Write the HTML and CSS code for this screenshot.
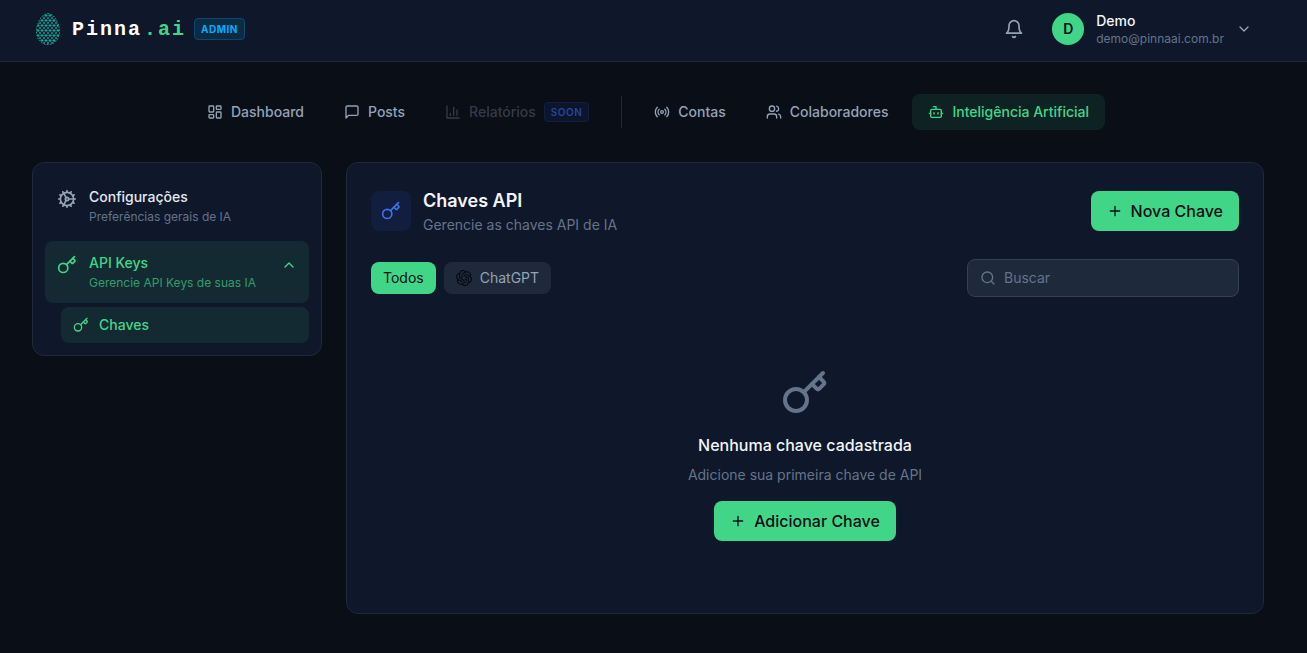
FILE: index.html
```html
<!DOCTYPE html>
<html lang="pt-BR">

<head>
    <meta charset="UTF-8">
    <meta name="viewport" content="width=device-width, initial-scale=1.0">
    <title>Pinna.ai - Chaves API</title>
    <link rel="stylesheet" href="styles.css">
</head>

<body>
    <!-- shared icons -->
    <svg class="sprite" aria-hidden="true">
        <symbol id="key" viewBox="0 0 24 24">
            <path d="m15.5 7.5 2.3 2.3a1 1 0 0 0 1.4 0l2.1-2.1a1 1 0 0 0 0-1.4L19 4" />
            <path d="m21 2-9.6 9.6" />
            <circle cx="7.5" cy="15.5" r="5.5" />
        </symbol>
        <symbol id="plus" viewBox="0 0 24 24">
            <path d="M5 12h14M12 5v14" />
        </symbol>
    </svg>

    <header class="header">
        <a class="brand" href="#">
            <svg class="brand-logo" viewBox="0 0 32 32" aria-hidden="true">
                <defs>
                    <pattern id="mesh" width="4" height="5" patternUnits="userSpaceOnUse">
                        <path d="M0 0l4 5M4 0L0 5M0 2.5h4" stroke="#0d8f83" stroke-width=".6" />
                        <circle cx="2" cy="2.5" r=".9" fill="#12b59d" />
                        <circle cx="0" cy="0" r=".8" fill="#12a894" />
                        <circle cx="4" cy="0" r=".8" fill="#12a894" />
                        <circle cx="0" cy="5" r=".8" fill="#12a894" />
                        <circle cx="4" cy="5" r=".8" fill="#12a894" />
                    </pattern>
                </defs>
                <path d="M16 .5C21.500 .5 27.500 9 27.500 18.500C27.500 26 23 31.500 16 31.500S4.500 26 4.500 18.500C4.500 9 10.500 .5 16 .5z" fill="url(#mesh)" stroke="#0fa08e" stroke-width="1" stroke-dasharray="1.500 1.500" />
            </svg>
            <span class="brand-name">Pinna<span class="brand-ai">.ai</span></span>
            <span class="badge-admin">ADMIN</span>
        </a>
        <div class="header-right">
            <button class="bell" type="button" aria-label="Notificações">
                <svg class="icon icon-20" viewBox="0 0 24 24">
                    <path d="M6 8a6 6 0 0 1 12 0c0 7 3 9 3 9H3s3-2 3-9" />
                    <path d="M10.3 21a1.94 1.94 0 0 0 3.4 0" />
                </svg>
            </button>
            <button class="user" type="button">
                <span class="avatar">D</span>
                <span class="user-info">
                    <span class="user-name">Demo</span>
                    <span class="user-email">demo@pinnaai.com.br</span>
                </span>
                <svg class="icon icon-16" viewBox="0 0 24 24"><path d="m6 9 6 6 6-6" /></svg>
            </button>
        </div>
    </header>

    <div class="page">
        <nav class="nav">
            <a class="nav-item" href="#">
                <svg class="icon icon-16" viewBox="0 0 24 24">
                    <rect width="7" height="9" x="3" y="3" rx="1" />
                    <rect width="7" height="5" x="14" y="3" rx="1" />
                    <rect width="7" height="9" x="14" y="12" rx="1" />
                    <rect width="7" height="5" x="3" y="16" rx="1" />
                </svg>
                Dashboard
            </a>
            <a class="nav-item" href="#">
                <svg class="icon icon-16" viewBox="0 0 24 24">
                    <path d="M21 15a2 2 0 0 1-2 2H7l-4 4V5a2 2 0 0 1 2-2h14a2 2 0 0 1 2 2z" />
                </svg>
                Posts
            </a>
            <button class="nav-item nav-soon" type="button" disabled>
                <svg class="icon icon-16" viewBox="0 0 24 24">
                    <path d="M3 3v18h18M18 17V9M13 17V5M8 17v-3" />
                </svg>
                Relatórios
                <span class="badge-soon">SOON</span>
            </button>
            <span class="nav-divider"></span>
            <a class="nav-item" href="#">
                <svg class="icon icon-16" viewBox="0 0 24 24">
                    <path d="M4.900 19.100C1 15.200 1 8.800 4.900 4.900" />
                    <path d="M7.800 16.200c-2.300-2.300-2.300-6.100 0-8.500" />
                    <circle cx="12" cy="12" r="2" />
                    <path d="M16.200 7.800c2.300 2.300 2.300 6.100 0 8.500" />
                    <path d="M19.100 4.900C23 8.800 23 15.100 19.100 19" />
                </svg>
                Contas
            </a>
            <a class="nav-item" href="#">
                <svg class="icon icon-16" viewBox="0 0 24 24">
                    <path d="M16 21v-2a4 4 0 0 0-4-4H6a4 4 0 0 0-4 4v2" />
                    <circle cx="9" cy="7" r="4" />
                    <path d="M22 21v-2a4 4 0 0 0-3-3.870M16 3.130a4 4 0 0 1 0 7.750" />
                </svg>
                Colaboradores
            </a>
            <a class="nav-item active" href="#">
                <svg class="icon icon-16" viewBox="0 0 24 24">
                    <path d="M12 8V4H8" />
                    <rect width="16" height="12" x="4" y="8" rx="2" />
                    <path d="M2 14h2M20 14h2M15 13v2M9 13v2" />
                </svg>
                Inteligência Artificial
            </a>
        </nav>

        <div class="container">
            <aside class="card sidebar">
                <a class="side-item" href="#">
                    <svg class="icon icon-20" viewBox="0 0 24 24">
                        <circle cx="12" cy="12" r="8" />
                        <circle cx="12" cy="12" r="2" />
                        <path d="M12 2v2M12 22v-2M17 20.660l-1-1.730M11 10.270 7 3.340M20.660 17l-1.730-1M3.340 7l1.730 1M14 12h8M2 12h2M20.660 7l-1.730 1M3.340 17l1.730-1M17 3.340l-1 1.730M11 13.730l-4 6.930" />
                    </svg>
                    <span class="side-text">
                        <span class="side-title">Configurações</span>
                        <span class="side-desc">Preferências gerais de IA</span>
                    </span>
                </a>
                <button class="side-item active" type="button" aria-expanded="true">
                    <svg class="icon icon-20"><use href="#key" /></svg>
                    <span class="side-text">
                        <span class="side-title">API Keys</span>
                        <span class="side-desc">Gerencie API Keys de suas IA</span>
                    </span>
                    <svg class="icon icon-16 side-arrow" viewBox="0 0 24 24"><path d="m18 15-6-6-6 6" /></svg>
                </button>
                <a class="side-sub active" href="#">
                    <svg class="icon icon-16"><use href="#key" /></svg>
                    Chaves
                </a>
            </aside>

            <main class="card main">
                <div class="main-header">
                    <span class="main-icon"><svg class="icon icon-20"><use href="#key" /></svg></span>
                    <div>
                        <h1 class="main-title">Chaves API</h1>
                        <p class="text-muted">Gerencie as chaves API de IA</p>
                    </div>
                    <button class="btn push-right" type="button">
                        <svg class="icon icon-16"><use href="#plus" /></svg>
                        Nova Chave
                    </button>
                </div>

                <div class="toolbar">
                    <button class="chip active" type="button">Todos</button>
                    <button class="chip" type="button">
                        <svg class="openai" viewBox="0 0 24 24" aria-hidden="true">
                            <path d="M22.2819 9.8211a5.9847 5.9847 0 0 0-.5157-4.9108 6.0462 6.0462 0 0 0-6.5098-2.9A6.0651 6.0651 0 0 0 4.9807 4.1818a5.9847 5.9847 0 0 0-3.9977 2.9 6.0462 6.0462 0 0 0 .7427 7.0966 5.98 5.98 0 0 0 .511 4.9107 6.051 6.051 0 0 0 6.5146 2.9001A5.9847 5.9847 0 0 0 13.2599 24a6.0557 6.0557 0 0 0 5.7718-4.2058 5.9894 5.9894 0 0 0 3.9977-2.9001 6.0557 6.0557 0 0 0-.7475-7.073zm-9.022 12.6081a4.4755 4.4755 0 0 1-2.8764-1.0408l.1419-.0804 4.7783-2.7582a.7948.7948 0 0 0 .3927-.6813v-6.7369l2.02 1.1686a.071.071 0 0 1 .038.052v5.5826a4.504 4.504 0 0 1-4.4945 4.4944zm-9.6607-4.1254a4.4708 4.4708 0 0 1-.5346-3.0137l.142.0852 4.783 2.7582a.7712.7712 0 0 0 .7806 0l5.8428-3.3685v2.3324a.0804.0804 0 0 1-.0332.0615L9.74 19.9502a4.4992 4.4992 0 0 1-6.1408-1.6464zM2.3408 7.8956a4.485 4.485 0 0 1 2.3655-1.9728V11.6a.7664.7664 0 0 0 .3879.6765l5.8144 3.3543-2.0201 1.1685a.0757.0757 0 0 1-.071 0l-4.8303-2.7865A4.504 4.504 0 0 1 2.3408 7.872zm16.5963 3.8558L13.1038 8.364 15.1192 7.2a.0757.0757 0 0 1 .071 0l4.8303 2.7913a4.4944 4.4944 0 0 1-.6765 8.1042v-5.6772a.79.79 0 0 0-.407-.667zm2.0107-3.0231l-.142-.0852-4.7735-2.7818a.7759.7759 0 0 0-.7854 0L9.409 9.2297V6.8974a.0662.0662 0 0 1 .0284-.0615l4.8303-2.7866a4.4992 4.4992 0 0 1 6.6802 4.66zM8.3065 12.863l-2.02-1.1638a.0804.0804 0 0 1-.038-.0567V6.0742a4.4992 4.4992 0 0 1 7.3757-3.4537l-.142.0805L8.704 5.459a.7948.7948 0 0 0-.3927.6813zm1.0976-2.3654l2.602-1.4998 2.6069 1.4998v2.9994l-2.5974 1.4997-2.6067-1.4997Z" />
                        </svg>
                        ChatGPT
                    </button>
                    <label class="search push-right">
                        <svg class="icon icon-16" viewBox="0 0 24 24">
                            <circle cx="11" cy="11" r="8" />
                            <path d="m21 21-4.300-4.300" />
                        </svg>
                        <input type="text" placeholder="Buscar" aria-label="Buscar">
                    </label>
                </div>

                <div class="empty">
                    <svg class="icon icon-48"><use href="#key" /></svg>
                    <h2 class="empty-title">Nenhuma chave cadastrada</h2>
                    <p class="text-muted empty-text">Adicione sua primeira chave de API</p>
                    <button class="btn" type="button">
                        <svg class="icon icon-16"><use href="#plus" /></svg>
                        Adicionar Chave
                    </button>
                </div>
            </main>
        </div>
    </div>
</body>

</html>
```
FILE: styles.css
```css
* {
    box-sizing: border-box;
    margin: 0;
    padding: 0;
}

body {
    background-color: #0a0e17;
    color: #f1f5f9;
    font-family: Inter, "Liberation Sans", sans-serif;
    font-size: 14px;
    line-height: 20px;
}

a {
    color: inherit;
    text-decoration: none;
}

button {
    border: none;
    background: none;
    color: inherit;
    font: inherit;
    cursor: pointer;
}

.sprite {
    display: none;
}

.icon {
    flex: none;
    fill: none;
    stroke: currentColor;
    stroke-width: 2;
    stroke-linecap: round;
    stroke-linejoin: round;
}

.icon-16 {
    width: 16px;
    height: 16px;
}

.icon-20 {
    width: 20px;
    height: 20px;
}

.icon-48 {
    width: 48px;
    height: 48px;
}

.push-right {
    margin-left: auto;
}

/* header */
.header {
    display: flex;
    align-items: center;
    justify-content: space-between;
    padding: 7px 43px 10px 32px;
    background-color: #0f172a;
    border-bottom: 1px solid #1e293b;
}

.brand {
    display: flex;
    align-items: center;
    gap: 8px;
}

.brand-logo {
    width: 32px;
    height: 32px;
}

.brand-name {
    padding-top: 2px;
    font-family: "Liberation Mono", monospace;
    font-size: 20px;
    font-weight: bold;
    letter-spacing: 2px;
    line-height: 28px;
    color: white;
}

.brand-ai {
    margin-left: 2px;
    color: #41d687;
}

.badge-admin {
    padding: 2px 6px;
    border: 1px solid #0b4a70;
    border-radius: 4px;
    background-color: #0d2b45;
    color: #00aeff;
    font-size: 10px;
    font-weight: 700;
    letter-spacing: 0.5px;
    line-height: 16px;
}

.header-right {
    display: flex;
    align-items: center;
    gap: 8px;
    color: #94a3b8;
}

.bell {
    display: flex;
    padding: 8px;
}

.user {
    display: flex;
    align-items: center;
    gap: 12px;
    padding: 4px 12px;
    text-align: left;
}

.avatar {
    width: 32px;
    border-radius: 50%;
    background-color: #41d687;
    color: #0a0e17;
    font-weight: 600;
    line-height: 32px;
    text-align: center;
}

.user-info {
    display: flex;
    flex-direction: column;
}

.user-name {
    color: #f1f5f9;
    font-weight: 500;
}

.user-email {
    color: #64748b;
    font-size: 12px;
    line-height: 16px;
}

/* top navigation */
.page {
    padding: 32px 43px 32px 32px;
}

.nav {
    display: flex;
    align-items: center;
    justify-content: center;
    gap: 8px;
    margin-bottom: 32px;
}

.nav-item {
    display: flex;
    align-items: center;
    gap: 8px;
    padding: 8px 16px;
    border-radius: 8px;
    color: #94a3b8;
    font-weight: 500;
}

.nav-item.active {
    background-color: #0f2223;
    color: #41d687;
}

.nav-soon {
    color: #343b48;
}

.badge-soon {
    padding: 1px 6px;
    border: 1px solid #112042;
    border-radius: 4px;
    background-color: #0c152b;
    color: #24469a;
    font-size: 10px;
    font-weight: 600;
    letter-spacing: 0.5px;
    line-height: 16px;
}

.nav-divider {
    width: 1px;
    height: 32px;
    margin: 0 8px;
    background-color: #1e293b;
}

/* content */
.container {
    display: grid;
    grid-template-columns: 290px 1fr;
    align-items: start;
    gap: 24px;
}

.card {
    border: 1px solid #1e293b;
    border-radius: 12px;
    background-color: #0f172a;
}

.sidebar {
    display: flex;
    flex-direction: column;
    gap: 4px;
    padding: 12px;
}

.side-item {
    display: flex;
    gap: 12px;
    padding: 12px;
    border-radius: 8px;
    color: #94a3b8;
    text-align: left;
}

.side-item .icon {
    margin-top: 2px;
}

.side-text {
    display: flex;
    flex: 1;
    flex-direction: column;
    gap: 2px;
}

.side-title {
    color: #e2e8f0;
    font-weight: 500;
}

.side-desc {
    color: #64748b;
    font-size: 12px;
    line-height: 16px;
}

.side-item.active,
.side-sub.active {
    background-color: #142a33;
    color: #41d687;
}

.side-item.active .side-title {
    color: #41d687;
}

.side-item.active .side-desc {
    color: #339e6a;
}

.side-item .side-arrow {
    margin-top: 4px;
}

.side-sub {
    display: flex;
    align-items: center;
    gap: 10px;
    margin-left: 16px;
    padding: 8px 12px;
    border-radius: 8px;
    font-weight: 500;
}

.main {
    padding: 24px;
}

.main-header {
    display: flex;
    align-items: center;
    gap: 12px;
    margin-bottom: 24px;
}

.main-icon {
    display: flex;
    padding: 10px;
    border-radius: 8px;
    background-color: #111e3e;
    color: #3f6fee;
}

.main-title {
    font-size: 18px;
    font-weight: 600;
    line-height: 28px;
}

.text-muted {
    color: #64748b;
}

.btn {
    display: flex;
    align-items: center;
    gap: 8px;
    padding: 8px 16px;
    border-radius: 8px;
    background-color: #41d687;
    color: #0a0e17;
    font-size: 16px;
    font-weight: 500;
    line-height: 24px;
}

.toolbar {
    display: flex;
    align-items: center;
    gap: 8px;
    margin-bottom: 24px;
}

.chip {
    display: flex;
    align-items: center;
    gap: 8px;
    padding: 6px 12px;
    border-radius: 8px;
    background-color: #1e293b;
    color: #94a3b8;
}

.chip.active {
    background-color: #41d687;
    color: #0a0e17;
}

.openai {
    width: 16px;
    height: 16px;
    fill: #05080e;
}

.search {
    display: flex;
    align-items: center;
    gap: 8px;
    width: 272px;
    padding: 8px 12px;
    border: 1px solid #334155;
    border-radius: 8px;
    background-color: #1e293b;
    color: #64748b;
}

.search input {
    flex: 1;
    min-width: 0;
    border: none;
    outline: none;
    background: none;
    color: #f1f5f9;
    font: inherit;
}

.search input::placeholder {
    color: #64748b;
}

.empty {
    display: flex;
    flex-direction: column;
    align-items: center;
    padding: 48px 0;
    color: #64748b;
}

.empty-title {
    margin: 16px 0 8px;
    color: #f1f5f9;
    font-size: 16px;
    font-weight: 500;
    line-height: 24px;
}

.empty-text {
    margin-bottom: 16px;
}
```
